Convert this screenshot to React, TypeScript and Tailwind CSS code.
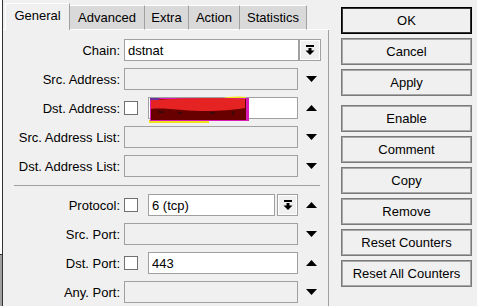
import React from "react";

const DownArrow = () => (
    <svg width="11" height="6" viewBox="0 0 11 6">
        <path d="M0 0h11L5.5 6z" fill="#000" />
    </svg>
);

const UpArrow = () => (
    <svg width="11" height="6" viewBox="0 0 11 6">
        <path d="M0 6h11L5.5 0z" fill="#000" />
    </svg>
);

const DropIcon = () => (
    <svg width="10" height="11" viewBox="0 0 10 11">
        <rect x="1" y="0" width="8" height="2" fill="#000" />
        <rect x="3.5" y="3" width="3" height="3" fill="#000" />
        <path d="M0.5 5.5h9L5 10z" fill="#000" />
    </svg>
);

const Redacted = () => (
    <svg width="102" height="28" viewBox="0 0 102 28" className="absolute left-[-1px] top-[-2px]">
        <rect x="1" y="24" width="60" height="3" fill="#f2e21a" />
        <path d="M70 3 C80 0 92 0 98 1 L98 4 L70 4 Z" fill="#f2e21a" />
        <rect x="2" y="2" width="99" height="23" fill="#d81cb8" />
        <rect x="3" y="3" width="95" height="21" fill="#690000" />
        <path d="M3 4 C30 2 70 1 97 3 L97 12 C80 15 55 16 35 14 C22 13 10 12 3 13 Z" fill="#e62323" />
        <rect x="2" y="2" width="9" height="2" fill="#6a2fa0" />
        <path d="M10 16h6M30 17h4M62 17h5M85 15v4" stroke="#111" strokeWidth="1" />
    </svg>
);

const Row = ({ label, children }: { label: string; children: React.ReactNode }) => (
    <div className="flex h-[22px] items-center">
        <div className="w-[117px] text-right leading-none">{label}</div>
        <div className="ml-[4px] flex h-full items-center">{children}</div>
    </div>
);

const Input = ({ w, value, disabled }: { w: string; value?: string; disabled?: boolean }) => (
    <div className={`${w} relative flex h-full items-center border border-[#a0a0a0] pl-[3px] leading-none ${disabled ? "bg-[#f0f0f0]" : "bg-white"}`}>
        {value}
    </div>
);

const Check = () => <div className="h-[14px] w-[14px] border border-[#707070] bg-white" />;

const DropBtn = ({ w }: { w: string }) => (
    <div className={`${w} flex h-full items-center justify-center border border-[#a0a0a0] bg-[#f0f0f0] shadow-[inset_0_0_0_1px_#fff]`}>
        <DropIcon />
    </div>
);

const Side = ({ up }: { up?: boolean }) => (
    <div className="flex w-[26px] justify-center">{up ? <UpArrow /> : <DownArrow />}</div>
);

const Btn = ({ label, focus, extra }: { label: string; focus?: boolean; extra?: string }) => (
    <div
        className={`flex h-[27px] w-[131px] items-center justify-center bg-[#f0f0f0] ${
            focus ? "border border-black shadow-[inset_0_0_0_1px_#333]" : "border border-[#7a7a7a] shadow-[inset_0_0_0_1px_#a8a8a8]"
        } ${extra ?? ""}`}
    >
        {label}
    </div>
);

const tabs = [
    { name: "General", w: "w-[65px]" },
    { name: "Advanced", w: "w-[75px]" },
    { name: "Extra", w: "w-[44px]" },
    { name: "Action", w: "w-[51px]" },
    { name: "Statistics", w: "w-[67px]" },
];

export default function App() {
    return (
        <div className="flex h-[306px] w-[477px] overflow-hidden bg-[#f0f0f0] font-['Liberation_Sans',Arial,sans-serif] text-[13px] text-black">
            {/* window edge */}
            <div className="flex w-[3px] flex-col">
                <div className="h-[254px] border-r border-[#333] bg-white" />
                <div className="flex-1 border-r border-t border-[#333] bg-[#a0a0a0]" />
            </div>

            {/* tabs + general panel */}
            <div className="flex w-[326px] flex-col">
                <div className="flex h-[30px] items-end">
                    <div className="h-[1px] w-[2px] bg-white" />
                    {tabs.map((t, i) =>
                        i === 0 ? (
                            <div key={t.name} className={`${t.w} flex h-[27px] items-center justify-center border-l border-t border-r border-white border-r-[#a0a0a0] bg-[#f0f0f0] pb-[2px]`}>
                                {t.name}
                            </div>
                        ) : (
                            <div key={t.name} className={`${t.w} flex h-[25px] items-center justify-center border-b border-t border-r border-white border-r-[#a0a0a0] bg-[#d9d9d9]`}>
                                {t.name}
                            </div>
                        )
                    )}
                    <div className="h-[1px] flex-1 bg-white" />
                </div>

                <div className="flex flex-1 flex-col border-r border-[#a0a0a0] pt-[9px]">
                    <div className="flex flex-col gap-[7px]">
                        <Row label="Chain:">
                            <Input w="w-[175px]" value="dstnat" />
                            <DropBtn w="w-[22px]" />
                        </Row>
                        <Row label="Src. Address:">
                            <Input w="w-[174px]" disabled />
                            <Side />
                        </Row>
                        <Row label="Dst. Address:">
                            <Check />
                            <div className="ml-[10px] flex h-full">
                                <div className="relative h-full w-[150px] border border-[#a0a0a0] bg-white">
                                    <Redacted />
                                </div>
                            </div>
                            <Side up />
                        </Row>
                        <Row label="Src. Address List:">
                            <Input w="w-[174px]" disabled />
                            <Side />
                        </Row>
                        <Row label="Dst. Address List:">
                            <Input w="w-[174px]" disabled />
                            <Side />
                        </Row>
                    </div>

                    <div className="my-[8px] ml-[11px] w-[306px] border-t border-[#a0a0a0]" />

                    <div className="flex flex-col gap-[7px]">
                        <Row label="Protocol:">
                            <Check />
                            <div className="ml-[10px] flex h-full">
                                <Input w="w-[127px]" value="6 (tcp)" />
                            </div>
                            <div className="ml-[2px] flex h-full">
                                <DropBtn w="w-[21px]" />
                            </div>
                            <Side up />
                        </Row>
                        <Row label="Src. Port:">
                            <Input w="w-[174px]" disabled />
                            <Side />
                        </Row>
                        <Row label="Dst. Port:">
                            <Check />
                            <div className="ml-[10px] flex h-full">
                                <Input w="w-[150px]" value="443" />
                            </div>
                            <Side up />
                        </Row>
                        <Row label="Any. Port:">
                            <Input w="w-[174px]" disabled />
                            <Side />
                        </Row>
                    </div>
                </div>
            </div>

            {/* buttons */}
            <div className="flex flex-col gap-[4px] pl-[12px] pt-[7px]">
                <Btn label="OK" focus />
                <Btn label="Cancel" />
                <Btn label="Apply" extra="mb-[5px]" />
                <Btn label="Enable" />
                <Btn label="Comment" />
                <Btn label="Copy" />
                <Btn label="Remove" />
                <Btn label="Reset Counters" />
                <Btn label="Reset All Counters" />
            </div>
        </div>
    );
}
